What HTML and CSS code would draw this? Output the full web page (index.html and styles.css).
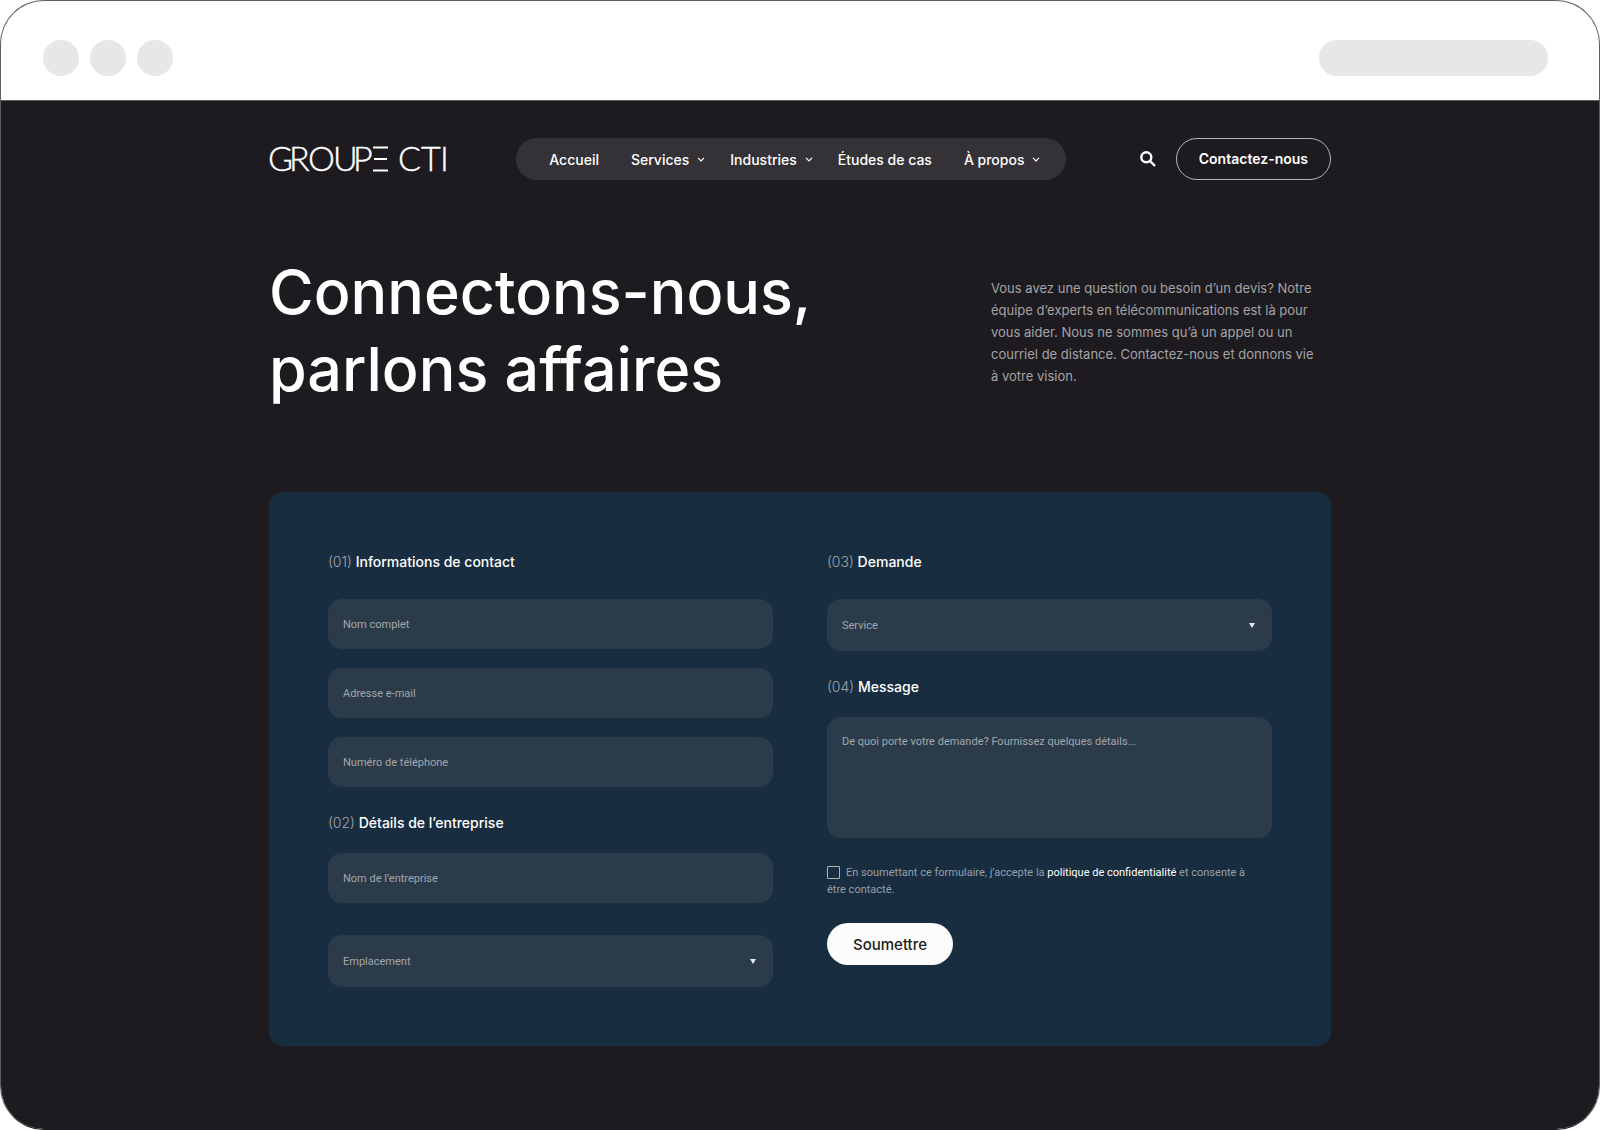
FILE: index.html
```html
<!DOCTYPE html>
<html lang="fr">
<head>
<meta charset="utf-8">
<meta name="viewport" content="width=device-width, initial-scale=1">
<title>Groupe CTI – Contact</title>
<link rel="stylesheet" href="styles.css">
</head>
<body>
<div class="browser">
  <div class="browser-bar">
    <div class="dots"><span class="dot"></span><span class="dot"></span><span class="dot"></span></div>
    <div class="address"></div>
  </div>
  <div class="page">
    <div class="container">
      <header class="header">
        <a class="logo" href="#" aria-label="Groupe CTI">
          <svg width="178" height="28" viewBox="0 0 178 28">
            <text class="logo-text" y="26" x="-1 20 39 64 84">GROUP</text>
            <path class="logo-bars" d="M104 2.500h15M105 14h13M104 25.500h15"/>
            <text class="logo-text" y="26" x="129 152 171">CTI</text>
          </svg>
        </a>
        <nav class="nav">
          <a class="nav-link" href="#">Accueil</a>
          <a class="nav-link has-menu" href="#">Services <svg class="chevron" viewBox="0 0 8 5"><path d="M1 .8l3 3 3-3"/></svg></a>
          <a class="nav-link has-menu" href="#">Industries <svg class="chevron" viewBox="0 0 8 5"><path d="M1 .8l3 3 3-3"/></svg></a>
          <a class="nav-link" href="#">Études de cas</a>
          <a class="nav-link has-menu" href="#">À propos <svg class="chevron" viewBox="0 0 8 5"><path d="M1 .8l3 3 3-3"/></svg></a>
        </nav>
        <div class="actions">
          <button class="search" type="button" aria-label="Rechercher">
            <svg width="16" height="16" viewBox="0 0 16 16"><circle cx="6.300" cy="6.300" r="5"/><path d="M10 10l5 5"/></svg>
          </button>
          <a class="contact" href="#">Contactez-nous</a>
        </div>
      </header>

      <section class="hero">
        <h1 class="title">Connectons-nous,<br>parlons affaires</h1>
        <p class="intro">Vous avez une question ou besoin d’un devis? Notre équipe d’experts en télécommunications est là pour vous aider. Nous ne sommes qu’à un appel ou un courriel de distance. Contactez-nous et donnons vie à votre vision.</p>
      </section>

      <form class="card">
        <div class="column">
          <h2 class="step"><span class="step-number">(01)</span> Informations de contact</h2>
          <div class="fields">
            <input class="field" type="text" placeholder="Nom complet" aria-label="Nom complet">
            <input class="field" type="email" placeholder="Adresse e-mail" aria-label="Adresse e-mail">
            <input class="field" type="tel" placeholder="Numéro de téléphone" aria-label="Numéro de téléphone">
          </div>
          <h2 class="step"><span class="step-number">(02)</span> Détails de l’entreprise</h2>
          <div class="fields fields-wide">
            <input class="field" type="text" placeholder="Nom de l’entreprise" aria-label="Nom de l’entreprise">
            <select class="field select" aria-label="Emplacement"><option>Emplacement</option></select>
          </div>
        </div>
        <div class="column">
          <h2 class="step"><span class="step-number">(03)</span> Demande</h2>
          <div class="fields">
            <select class="field select" aria-label="Service"><option>Service</option></select>
          </div>
          <h2 class="step"><span class="step-number">(04)</span> Message</h2>
          <div class="fields">
            <textarea class="field message" placeholder="De quoi porte votre demande? Fournissez quelques détails..." aria-label="Message"></textarea>
          </div>
          <div class="consent">
            <input class="check" type="checkbox" id="consent"><label for="consent">En soumettant ce formulaire, j’accepte la <a class="policy" href="#">politique de confidentialité</a> et consente à être contacté.</label>
          </div>
          <button class="submit" type="submit">Soumettre</button>
        </div>
      </form>
    </div>
  </div>
</div>
</body>
</html>
```
FILE: styles.css
```css
* {
  box-sizing: border-box;
}

body {
  margin: 0;
  background: #fff;
  color: #fff;
  font-family: Inter, "Liberation Sans", sans-serif;
}

a {
  color: inherit;
  text-decoration: none;
}

/* Browser frame */
.browser {
  display: flex;
  flex-direction: column;
  min-height: 100vh;
  overflow: hidden;
  border: 1px solid #5f5e61;
  border-bottom-color: #1d1b20;
  border-radius: 44px;
  background: #fff;
}

.browser-bar {
  display: flex;
  align-items: center;
  justify-content: space-between;
  height: 100px;
  padding: 15px 51px 0 42px;
  border-bottom: 1px solid #5f5e61;
}

.dots {
  display: flex;
  gap: 11px;
}

.dot {
  width: 36px;
  height: 36px;
  border-radius: 50%;
  background: #e7e7e7;
}

.address {
  width: 229px;
  height: 36px;
  border-radius: 18px;
  background: #e7e7e7;
}

.page {
  flex: 1;
  padding: 37px 24px 83px;
  background: #1d1b20;
}

.container {
  max-width: 1062px;
  margin: 0 auto;
}

/* Header */
.header {
  display: flex;
  align-items: center;
  justify-content: space-between;
}

.logo svg {
  display: block;
  overflow: visible;
}

.logo-text {
  fill: #fff;
  stroke: #fff;
  stroke-width: 0.4;
  font-family: Lato, sans-serif;
  font-size: 34px;
  font-weight: 300;
}

.logo-bars {
  fill: none;
  stroke: #fff;
  stroke-width: 2;
}

.nav {
  display: flex;
  align-items: center;
  height: 42px;
  padding: 0 17px;
  border-radius: 21px;
  background: #343237;
}

.nav-link {
  display: flex;
  align-items: center;
  gap: 8px;
  padding: 0 16px;
  font-size: 14px;
  font-weight: 500;
}

.has-menu {
  padding-right: 9px;
}

.chevron {
  width: 8px;
  height: 5px;
  fill: none;
  stroke: #fff;
  stroke-width: 1.2;
}

.actions {
  display: flex;
  align-items: center;
  gap: 16px;
}

.search {
  padding: 0 4px;
  border: 0;
  background: none;
}

.search svg {
  display: block;
  fill: none;
  stroke: #fff;
  stroke-width: 2.4;
}

.contact {
  padding: 0 22px;
  border: 1px solid #b5b4b6;
  border-radius: 21px;
  font-size: 14px;
  font-weight: 600;
  line-height: 40px;
}

/* Hero */
.hero {
  display: flex;
  align-items: center;
  justify-content: space-between;
  padding: 74px 0 84px;
}

.title {
  margin: 0;
  font-size: 61px;
  font-weight: 500;
  line-height: 77px;
}

.intro {
  width: 340px;
  margin: 0;
  padding: 2px 8px 0 0;
  color: #a4a3a5;
  font-size: 13px;
  line-height: 22px;
}

/* Form */
.card {
  display: grid;
  grid-template-columns: 1fr 1fr;
  gap: 54px;
  padding: 59px;
  border-radius: 14px;
  background: #182d40;
}

.step {
  margin: 25px 0 19px;
  font-size: 14px;
  font-weight: 500;
  line-height: 22px;
}

.step:first-child {
  margin: 0 0 26px;
}

.step-number {
  color: #a3a6aa;
  font-weight: 300;
}

.fields {
  display: flex;
  flex-direction: column;
  gap: 19px;
}

.fields-wide {
  gap: 32px;
}

.field {
  display: block;
  width: 100%;
  height: 50px;
  padding: 0 15px;
  border: 0;
  border-radius: 14px;
  background: #2b3b4a;
  color: #a3a7ab;
  font: 400 11px Roboto, "Liberation Sans", sans-serif;
}

.field::placeholder {
  color: #a3a7ab;
}

.select {
  height: 52px;
  appearance: none;
  background: #2b3b4a url("data:image/svg+xml,%3Csvg xmlns='http://www.w3.org/2000/svg' width='6' height='5'%3E%3Cpath d='M0 0h6L3 5z' fill='%23e4e5e6'/%3E%3C/svg%3E") no-repeat right 17px center;
}

.message {
  height: 121px;
  padding-top: 18px;
  resize: none;
}

.consent {
  margin: 26px 0 25px;
  padding-right: 16px;
  color: #97a0a8;
  font-family: Roboto, "Liberation Sans", sans-serif;
  font-size: 11px;
  line-height: 17px;
}

.check {
  appearance: none;
  width: 13px;
  height: 13px;
  margin: 0 6px 0 0;
  border: 1px solid #b0b5ba;
  border-radius: 1px;
  vertical-align: -3px;
}

.policy {
  color: #fff;
}

.submit {
  height: 42px;
  padding: 0 26px;
  border: 0;
  border-radius: 21px;
  background: #fcfcfc;
  color: #1d1b20;
  font: 500 15px Inter, "Liberation Sans", sans-serif;
}
```
